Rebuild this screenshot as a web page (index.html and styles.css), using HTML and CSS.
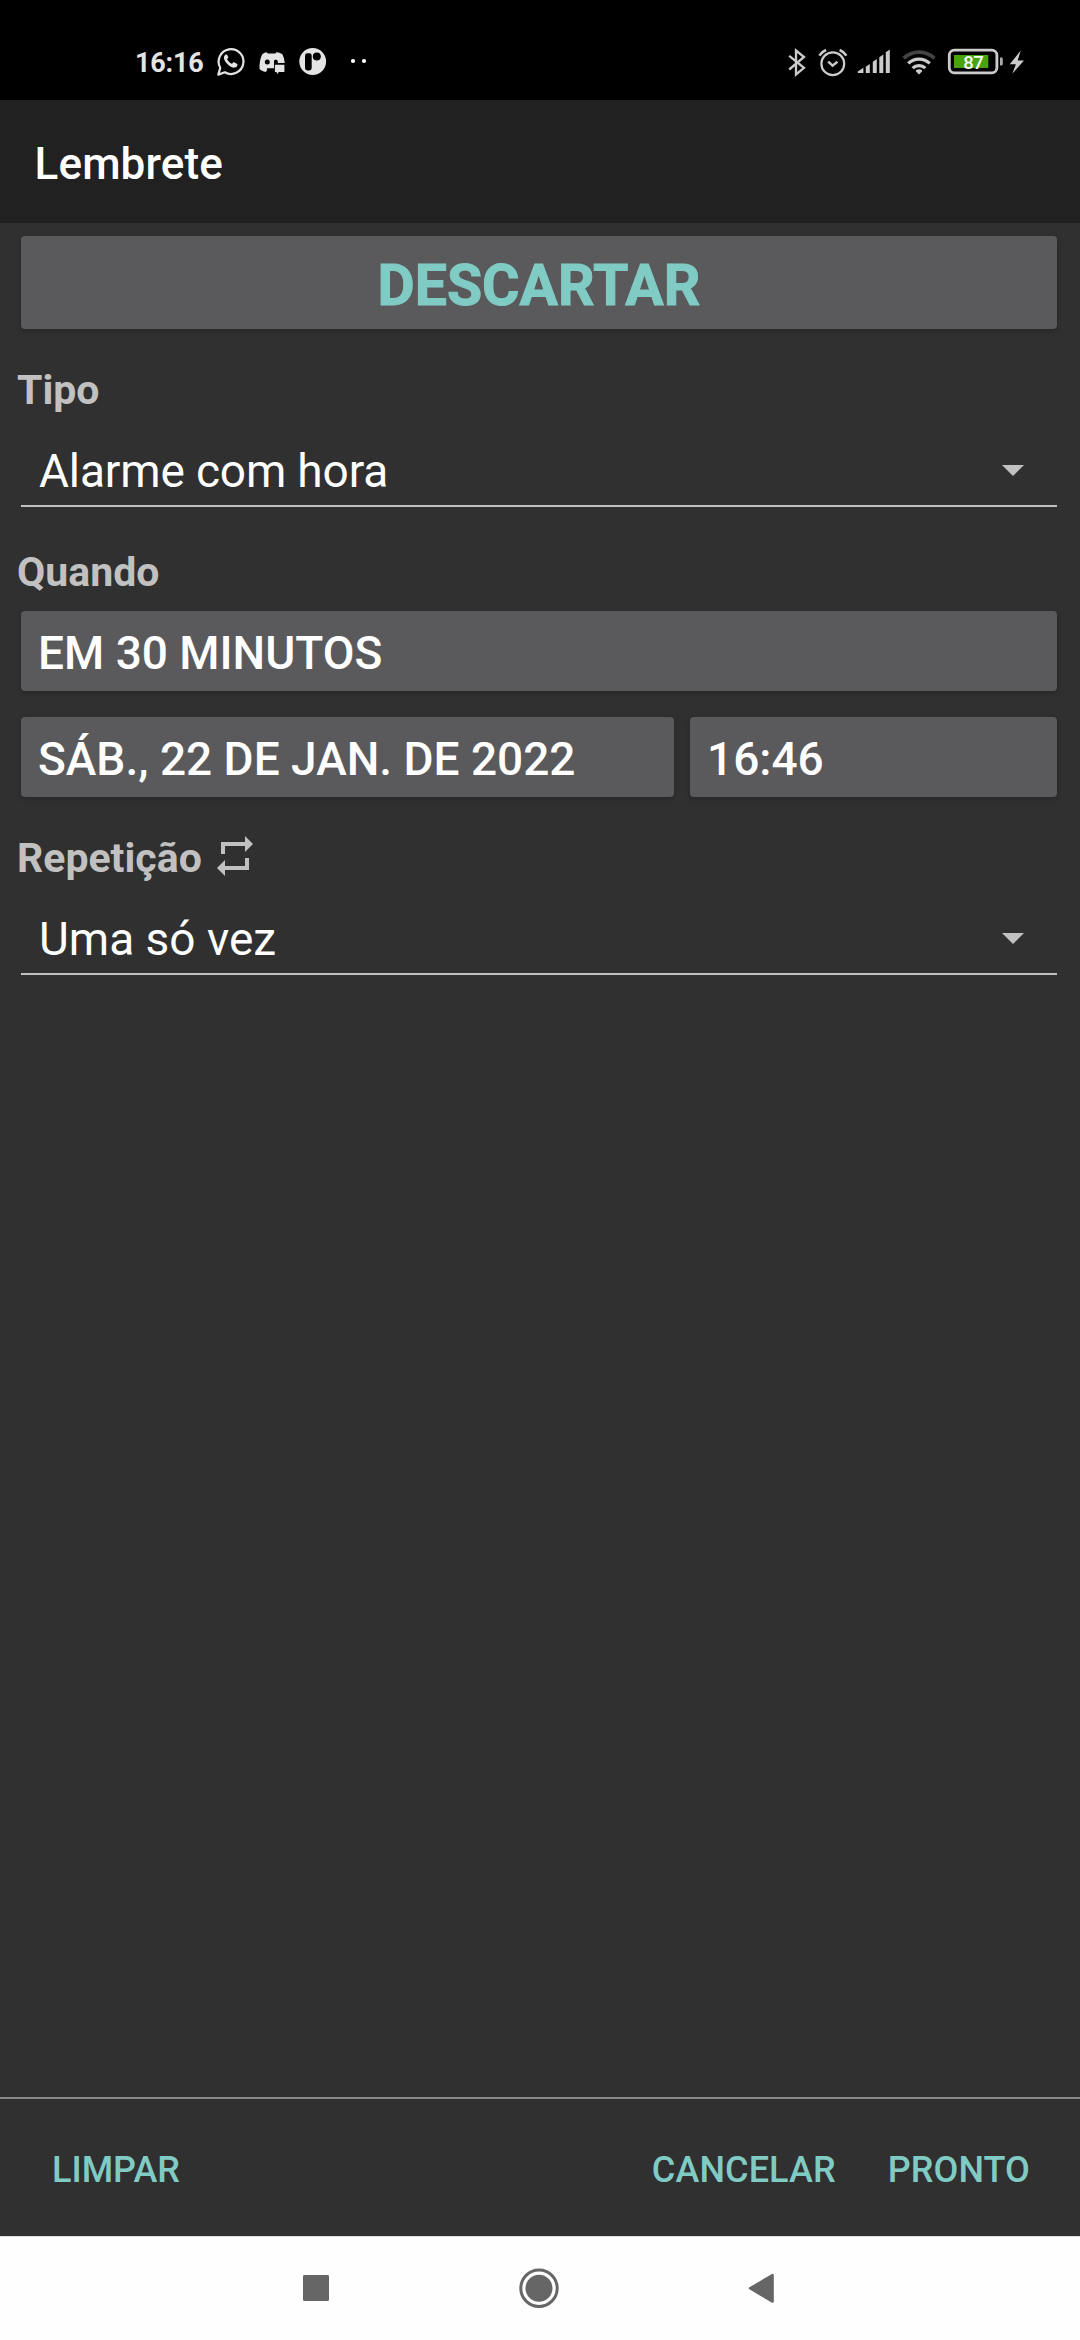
FILE: index.html
```html
<!DOCTYPE html>
<html lang="pt-BR">
<head>
<meta charset="utf-8">
<title>Lembrete</title>
<link rel="stylesheet" href="styles.css">
</head>
<body>
<div class="screen">
  <div class="statusbar">
    <div class="status-left">
      <span class="clock">16:16</span>
      <svg class="ic" width="32" height="40" viewBox="214 42 32 40" fill="none" stroke="#e4e4e4">
        <path d="M218.3 74.6l2-6.8a12.4 12.4 0 1 1 4.5 4.5z" stroke-width="2.2" stroke-linejoin="round"/>
        <path d="M225.6 54.6c-2.2 1.6-2.2 4.3.2 7.700 2.400 3.400 6.300 6 9.200 5.200 2.200-.6 2.800-2.200 2.300-3.600l-3.500-1.900c-.9.300-1.300 2-2.100 1.800-1.800-.8-3.800-2.800-4.600-4.500 0-.8 1.400-1.300 1.200-2.200l-1.400-2.700z" fill="#e4e4e4" stroke="none"/>
      </svg>
      <svg class="ic discord" width="32" height="40" viewBox="256 42 32 40" fill="#e4e4e4">
        <path d="M266.500 52.200l1.200 1.300h7.600l1.200-1.300c2.600.3 4.800 1.100 6 2.300 1.200 2.700 2 5.200 2.200 8.500h-10.700v5.200h-6.800l-.6 1 .8.500-1.700 2.200c-2.700-.4-5-1.500-6.200-3.200-.2-5.200.6-10.200 2.600-14.300 1.200-1.200 2.600-2 4.400-2.200z"/>
        <circle cx="267.300" cy="62" r="2.500" fill="#000"/>
        <path d="M274 60.500l1.800-1 2 1.200v2.500h-3.800z" fill="#000"/>
        <path d="M274.900 64.700h9.500v7.200h-5.700l-1.200 2-1-2h-1.600z"/>
      </svg>
      <svg class="ic pico" width="30" height="40" viewBox="298 42 30 40">
        <circle cx="312.700" cy="61.500" r="13.400" fill="#e4e4e4"/>
        <rect x="305" y="53.300" width="6.700" height="17.200" rx="2.400" fill="#000"/>
        <circle cx="316.800" cy="56.400" r="4" fill="#000"/>
      </svg>
      <svg class="ic dots" width="20" height="40" viewBox="349 42 20 40" fill="#fff">
        <circle cx="353" cy="61" r="2.100"/><circle cx="364" cy="61" r="2.100"/>
      </svg>
    </div>
    <div class="status-right">
      <svg class="ic" width="22" height="40" viewBox="786 42 22 40" fill="none" stroke="#ccc" stroke-width="2.300">
        <path d="M789.200 55.800l14.800 12-8 6.700v-24l8 6.500-14.800 12.500"/>
      </svg>
      <svg class="ic" width="32" height="40" viewBox="817 42 32 40" fill="none" stroke="#ccc" stroke-width="2.200">
        <circle cx="832.800" cy="63.700" r="11.400"/>
        <path d="M828.200 61.600l4.400 4 4.800-3.800" stroke-width="2.400"/>
        <path d="M819.300 55.700q2.500-4 6.800-5.700M846.400 55.700q-2.500-4-6.800-5.700" stroke-width="2.500"/>
      </svg>
      <svg class="ic" width="36" height="40" viewBox="856 42 36 40" fill="#ccc">
        <path d="M857.800 73v-1.400l5.600-3.800v5.200zM865.800 73v-6.300l4-2.700v9zM872.800 73v-11.300l4-2.700v14zM879.300 73v-15.800l4-2.700v18.500zM885.800 73v-20.800l4-2.700v23.500z"/>
      </svg>
      <svg class="ic" width="36" height="40" viewBox="901 42 36 40" fill="none" stroke="#ccc" stroke-width="3.200">
        <path d="M903.600 58.200a22.500 22.500 0 0 1 30.800 0" stroke="#444" stroke-width="3.600"/>
        <path d="M908.200 63.400a15.600 15.600 0 0 1 21.600 0M912.600 68.200a9.300 9.300 0 0 1 12.800 0"/>
        <path d="M919 74.500l-3.200-3.200q0-2 3.200-2t3.200 2z" fill="#ccc" stroke="none"/>
      </svg>
      <svg class="ic" width="58" height="40" viewBox="946 42 58 40">
        <rect x="949.300" y="50.200" width="47.600" height="22.600" rx="5" fill="none" stroke="#ccc" stroke-width="2.800"/>
        <rect x="954" y="55" width="34.300" height="13" fill="#47a40e"/>
        <path d="M1000 57.500h1.400q1.400 0 1.400 1.400v5.200q0 1.400-1.400 1.400h-1.400z" fill="#aaa"/>
        <text class="pct" x="963.300" y="68.600">87</text>
      </svg>
      <svg class="ic" width="20" height="40" viewBox="1007 42 20 40" fill="#ccc">
        <path d="M1020.700 50.500l-11 13.800h6.200l-3.600 9.400 11.700-13.200h-6.300z"/>
      </svg>
    </div>
  </div>

  <header class="titlebar">Lembrete</header>

  <main class="form">
    <button class="btn discard">Descartar</button>

    <div class="label">Tipo</div>
    <div class="spinner">
      <span class="tight">Alarme com hora</span>
      <svg class="caret" width="22" height="11" viewBox="0 0 22 11"><path d="M0 0h22l-11 11z"/></svg>
    </div>

    <div class="label">Quando</div>
    <button class="btn">Em 30 minutos</button>
    <div class="row">
      <button class="btn date">sáb., 22 de jan. de 2022</button>
      <button class="btn time">16:46</button>
    </div>

    <div class="label repeat">Repetição
      <svg class="loop" width="36" height="40" viewBox="0 0 36 40"><path d="M4 18V6h24V0l8 8-8 8v-6H8v8zM32 22v12H8v6l-8-8 8-8v6h20v-8z"/></svg>
    </div>
    <div class="spinner">
      <span>Uma só vez</span>
      <svg class="caret" width="22" height="11" viewBox="0 0 22 11"><path d="M0 0h22l-11 11z"/></svg>
    </div>
  </main>

  <footer class="actions">
    <button class="flat">Limpar</button>
    <div class="group">
      <button class="flat">Cancelar</button>
      <button class="flat">Pronto</button>
    </div>
  </footer>

  <nav class="navbar">
    <svg width="40" height="44" viewBox="296 2266 40 44" fill="#666"><rect x="303" y="2275" width="26" height="26" rx="1.200"/></svg>
    <svg width="44" height="44" viewBox="517.300 2266 44 44"><circle cx="539.300" cy="2288.300" r="18.200" fill="none" stroke="#666" stroke-width="3"/><circle cx="539.300" cy="2288.300" r="13.500" fill="#666"/></svg>
    <svg width="40" height="44" viewBox="741 2266 40 44" fill="#666" stroke="#666" stroke-width="2.400" stroke-linejoin="round"><path d="M750 2288.300l22.600-13.300v26.600z"/></svg>
  </nav>
</div>
</body>
</html>
```
FILE: styles.css
```css
* { box-sizing: border-box; }

body {
  margin: 0;
  background: #303030;
  font-family: Roboto, "Liberation Sans", sans-serif;
}

svg { display: block; flex: none; }

button {
  border: 0;
  margin: 0;
  font-family: inherit;
  font-weight: 500;
  text-transform: uppercase;
  white-space: nowrap;
}

.screen {
  width: 1080px;
  height: 2340px;
  display: flex;
  flex-direction: column;
  background: #303030;
}

/* Status bar */
.statusbar {
  height: 100px;
  flex: none;
  padding: 42px 53px 0 135px;
  background: #000;
  display: flex;
  justify-content: space-between;
  align-items: flex-start;
}

.status-left, .status-right { display: flex; height: 40px; }
.status-right { gap: 9px; }
.status-right svg:nth-child(3) { margin-left: -2px; }
.status-right svg:nth-child(6) { margin-left: -6px; }

.clock {
  width: 79px;
  font-size: 27px;
  font-weight: 700;
  line-height: 42px;
  letter-spacing: -0.2px;
  color: #e4e4e4;
}
.discord { margin-left: 10px; }
.pico { margin-left: 10px; }
.dots { margin-left: 21px; }
.pct { font-size: 18.5px; font-weight: 500; fill: #fff; letter-spacing: -0.6px; }

/* Title */
.titlebar {
  height: 123px;
  flex: none;
  padding-left: 34.500px;
  padding-top: 3px;
  background: #212121;
  color: #fff;
  font-size: 44px;
  font-weight: 500;
  line-height: 123px;
  letter-spacing: 0.15px;
}

/* Form */
.form {
  flex: 1;
  padding: 13px 23px 0 21px;
  display: flex;
  flex-direction: column;
}

.btn {
  height: 80px;
  flex: none;
  padding: 4px 17px 0;
  border-radius: 4px;
  background: #5a5a5c;
  box-shadow: 0 2px 5px rgba(0, 0, 0, .22);
  color: #fff;
  font-size: 46px;
  line-height: 76px;
  text-align: left;
}

.discard {
  height: 93px;
  padding-top: 6px;
  color: #80cbc4;
  font-size: 57.200px;
  font-weight: 700;
  line-height: 87px;
  text-align: center;
  -webkit-text-stroke: 1px #80cbc4;
}

.label {
  height: 48px;
  margin: 37px 0 0 -4px;
  color: #c1c1c1;
  font-size: 41px;
  font-weight: 700;
  line-height: 48px;
}

.spinner {
  height: 71px;
  margin-top: 22px;
  padding: 0 33.500px 0 18px;
  border-bottom: 2px solid #c1c1c1;
  display: flex;
  align-items: center;
  justify-content: space-between;
  color: #fff;
  font-size: 46px;
  line-height: 69px;
}
.spinner span { padding-top: 2px; line-height: 67px; }
.tight { letter-spacing: -0.15px; }
.caret { fill: #c1c1c1; }

.spinner + .label { margin-top: 41px; }
.label + .btn { margin-top: 15px; }

.row { display: flex; gap: 16px; margin-top: 26px; }
.date { width: 653px; }
.time { flex: 1; }

.repeat { display: flex; align-items: center; gap: 15px; }
.loop { fill: #c1c1c1; margin-top: -4px; }

/* Footer */
.actions {
  height: 139px;
  flex: none;
  border-top: 2px solid #888;
  padding: 4px 50px 0 52px;
  display: flex;
  align-items: center;
  justify-content: space-between;
}
.group { display: flex; gap: 52px; letter-spacing: 0.1px; }
.group .flat { letter-spacing: 0.1px; }
.flat {
  padding: 0;
  background: none;
  color: #80cbc4;
  font-size: 36px;
  line-height: 48px;
}

/* Navigation bar */
.navbar {
  height: 104px;
  flex: none;
  border-top: 1px solid #e2e2e2;
  background: #fefefe;
  padding: 29px 299px 0 296px;
  display: flex;
  justify-content: space-between;
  align-items: flex-start;
}
```
